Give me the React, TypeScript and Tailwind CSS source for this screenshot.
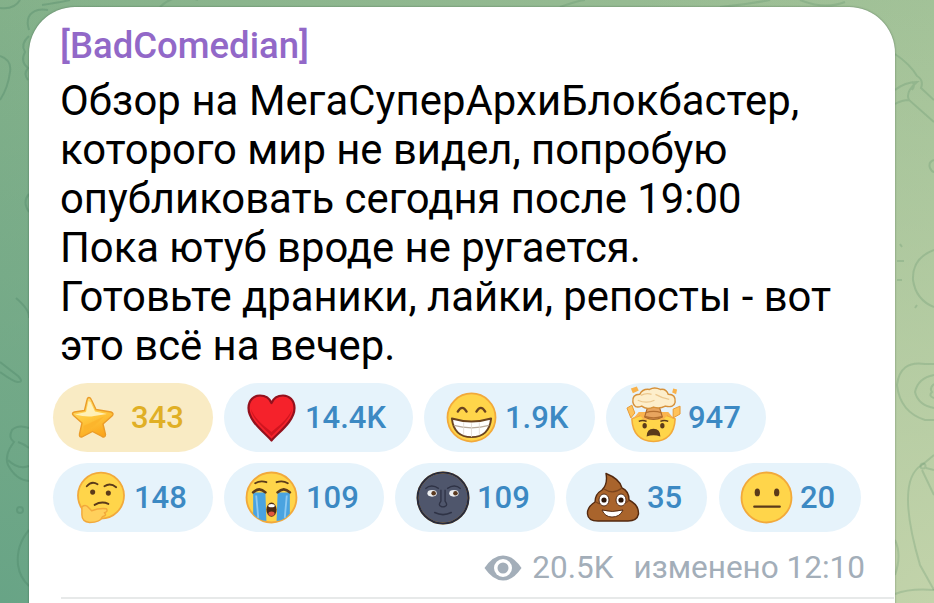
import type { ReactNode } from "react";

const Star = () => (
  <svg viewBox="0 0 44 43" className="h-[43px] w-[44px]">
    <defs>
      <linearGradient id="starFill" x1="0.2" y1="0" x2="0.6" y2="1">
        <stop offset="0" stopColor="#ffe27a" />
        <stop offset="0.5" stopColor="#ffc93f" />
        <stop offset="1" stopColor="#fba61c" />
      </linearGradient>
    </defs>
    <path
      d="M18 1.5 Q19.5 1.5 20.5 4 L25 13.5 L40 16 Q43.5 17.5 41 20 L32 28 L34.5 38.5 Q34.5 42 31 40.5 L21.5 35.5 L11 41 Q8 41.5 8.5 38 L11 27 L2.5 19.5 Q0 17 3.5 16 L13.5 14.5 L16 4 Q16.5 1.5 18 1.5 Z"
      fill="url(#starFill)"
      stroke="#eb9c28"
      strokeWidth="1.4"
      strokeLinejoin="round"
    />
    <path d="M17.5 5 L15 16 L4 18.5 Q16 21.5 23 20 L36 18 L24 15.5 L19.5 6 Z" fill="#fff4c4" opacity="0.9" />
    <path d="M12.5 30 L33 20.5 L24 29 L13 36 Z" fill="#fcb42c" opacity="0.85" />
  </svg>
);

const Heart = () => (
  <svg viewBox="0 0 49 48" className="h-[48px] w-[49px]">
    <path
      d="M24.5 46.5 C17 38 1.5 27 1.5 14 C1.5 6 7 1.5 13 1.5 C18 1.5 22.5 4 24.5 9 C26.5 4 31 1.5 36 1.5 C42 1.5 47.5 6 47.5 14 C47.5 27 32 38 24.5 46.5 Z"
      fill="#f5222b"
      stroke="#93111d"
      strokeWidth="2.2"
      strokeLinejoin="round"
    />
    <path
      d="M24.5 42 C18 35 5 25 4 15 C8 26 19 33 24.5 38 C30 33 41 26 45 15 C44 25 31 35 24.5 42 Z"
      fill="#d0151f"
    />
  </svg>
);

const Face = ({ children, fill = "#ffd54a" }: { children: ReactNode; fill?: string }) => (
  <svg viewBox="0 0 52 52" className="h-full w-full">
    <circle cx="26" cy="26" r="24.5" fill={fill} stroke="#f2a93b" strokeWidth="1.8" />
    {children}
  </svg>
);

const Grin = () => (
  <div className="h-[51px] w-[51px]">
    <Face>
      <path d="M12 20 Q16.5 12.5 21 20 M31 20 Q35.5 12.5 40 20" fill="none" stroke="#6b4420" strokeWidth="2.4" strokeLinecap="round" />
      <path d="M6 27 Q26 33 46 27 Q44 46 26 46 Q8 46 6 27 Z" fill="#fff" stroke="#6b4420" strokeWidth="2" strokeLinejoin="round" />
      <path d="M8 34 Q26 39 44 34" fill="none" stroke="#b8aa9c" strokeWidth="1.2" />
      <path d="M18 31 V44 M26 32 V46 M34 31 V44" stroke="#e0d9d2" strokeWidth="0.8" />
    </Face>
  </div>
);

const Exploding = () => (
  <svg viewBox="0 0 58 58" className="h-[58px] w-[57px]">
    <path d="M7 34 Q8 56 29 57 Q50 56 51 34 Q40 28 29 29 Q18 28 7 34 Z" fill="#ffd54a" stroke="#f2a93b" strokeWidth="1.6" />
    <path d="M8 34 L15 30 L20 36 L29 32 L38 36 L43 30 L50 34 L44 27 L14 27 Z" fill="#fbb44e" />
    <path d="M23 22 H35 L38 32 Q29 37 20 32 Z" fill="#e8a55f" stroke="#a9662d" strokeWidth="1.1" />
    <path d="M21 27.5 Q29 25 37 27.5 M20 31.5 Q29 34.5 38 31.5" fill="none" stroke="#b5702f" strokeWidth="1.3" />
    <path
      d="M8 17 Q7 9 15 9 Q18 3 25 4 Q30 1 36 4 Q42 3 44 9 Q52 9 51 17 Q50 23 41 21 Q35 24 29 22 Q22 25 17 21 Q9 24 8 17 Z"
      fill="#fdeecb"
      stroke="#d6913a"
      strokeWidth="1.5"
    />
    <path d="M13 15 Q22 19 30 15 M31 9 Q38 13 45 14 M16 10 Q22 7 27 9" fill="none" stroke="#ecc88f" strokeWidth="1.3" />
    <path d="M2 23 L7 20 L10 28 L6 33 Z" fill="#ffc25a" stroke="#e79a35" strokeWidth="1" />
    <path d="M49 24 L56 21 L56 29 L49 33 Z" fill="#ffc25a" stroke="#e79a35" strokeWidth="1" />
    <path d="M6 3 L12 1 L14 5 L8 8 Z" fill="#f9b24b" />
    <path d="M49 3 L53 4 L52 9 L48 7 Z" fill="#f9b24b" />
    <ellipse cx="20" cy="41" rx="2.2" ry="2.8" fill="#5b3a1a" />
    <ellipse cx="38" cy="41" rx="2.2" ry="2.8" fill="#5b3a1a" />
    <path d="M22 52 Q22 44 29 44 Q36 44 36 52 Q29 49 22 52 Z" fill="#5b3a1a" />
    <path d="M14 36.5 Q18 34.5 22 36.5 M36 36.5 Q40 34.5 44 36.5" fill="none" stroke="#5b3a1a" strokeWidth="1.5" />
  </svg>
);

const Thinking = () => (
  <svg viewBox="0 0 50 53" className="h-[53px] w-[49px]">
    <circle cx="25.5" cy="24.5" r="23.5" fill="#ffd54a" stroke="#f2a93b" strokeWidth="1.8" />
    <path d="M11 15 Q16 9 22 13 M29 15 Q35 11 41 16" fill="none" stroke="#5b3a1a" strokeWidth="1.9" strokeLinecap="round" />
    <circle cx="17" cy="21" r="2.6" fill="#5b3a1a" />
    <circle cx="33" cy="22" r="2.6" fill="#5b3a1a" />
    <path d="M19 34 Q26 30 33 33" fill="none" stroke="#5b3a1a" strokeWidth="2" strokeLinecap="round" />
    <path
      d="M6 36 Q10 33 13 37 L16 40 Q24 37 31 38 Q33 41 29 42 Q32 45 27 46 Q25 52 14 52 Q6 51 6 44 Z"
      fill="#ffd05c"
      stroke="#f2a93b"
      strokeWidth="1.5"
      strokeLinejoin="round"
    />
  </svg>
);

const Crying = () => (
  <div className="h-[53px] w-[53px]">
    <Face>
      <path d="M10 12 Q15 9 21 11 M31 11 Q37 9 42 12" fill="none" stroke="#5b3a1a" strokeWidth="1.8" strokeLinecap="round" />
      <path d="M8 21 H20 L21 49 Q14 49 8 42 Z M32 21 H44 V42 Q38 49 31 49 Z" fill="#4aa3e0" />
      <path d="M8 21 Q14 15 20 21 M32 21 Q38 15 44 21" fill="none" stroke="#5b3a1a" strokeWidth="2.6" strokeLinecap="round" />
      <path d="M11 24 L13 46 M41 24 L39 46" stroke="#8cc9f2" strokeWidth="1.8" />
      <ellipse cx="26" cy="38" rx="5" ry="7" fill="#4c2a14" />
      <ellipse cx="26" cy="34" rx="3.2" ry="1.6" fill="#fff" />
      <ellipse cx="26" cy="42" rx="3" ry="2.2" fill="#e2563e" />
    </Face>
  </div>
);

const Moon = () => (
  <div className="h-[54px] w-[54px]">
    <Face fill="#4f566c">
      <circle cx="26" cy="26" r="24.5" fill="none" stroke="#272b3d" strokeWidth="2" />
      <path d="M9 17 Q15 12 22 17 M30 17 Q37 12 43 17" fill="none" stroke="#2f3346" strokeWidth="1.3" />
      <ellipse cx="15.5" cy="21.5" rx="4.5" ry="3.2" fill="#eef0f2" />
      <ellipse cx="36.5" cy="21.5" rx="4.5" ry="3.2" fill="#eef0f2" />
      <circle cx="17" cy="21.5" r="2.2" fill="#5a3a20" />
      <circle cx="38" cy="21.5" r="2.2" fill="#5a3a20" />
      <path d="M24 18 V29 Q21 33 24 34 Q26 35 28 34 Q31 33 28 29 V18" fill="none" stroke="#2f3346" strokeWidth="1.3" />
      <path d="M18 40 Q26 44 34 40" fill="none" stroke="#2f3346" strokeWidth="1.5" strokeLinecap="round" />
    </Face>
  </div>
);

const Poop = () => (
  <svg viewBox="0 0 54 51" className="h-[51px] w-[54px]">
    <path
      d="M20 1.5 Q34 7 36 16 Q43 19 43 28 Q53 33 52.5 42 Q51 49 42 49 H12 Q2 49 1.5 42 Q1 35 9 30 Q9 22 16 18 Q22 12 20 1.5 Z"
      fill="#a9642c"
      stroke="#53290f"
      strokeWidth="1.4"
      strokeLinejoin="round"
    />
    <path d="M18 17 Q27 23 36 16 M10 30 Q14 33 18 32 M38 31 Q41 31 43 28" fill="none" stroke="#7b441c" strokeWidth="1.2" />
    <ellipse cx="18" cy="28" rx="5" ry="6" fill="#fff" stroke="#4a2410" strokeWidth="0.9" />
    <ellipse cx="35" cy="28" rx="5" ry="6" fill="#fff" stroke="#4a2410" strokeWidth="0.9" />
    <circle cx="18" cy="28" r="2.6" fill="#2a1408" />
    <circle cx="35" cy="28" r="2.6" fill="#2a1408" />
    <path d="M16 38 Q26 41 37 38 Q34 45 26 45 Q19 45 16 38 Z" fill="#fff" stroke="#4a2410" strokeWidth="0.9" />
  </svg>
);

const Neutral = () => (
  <div className="h-[53px] w-[53px]">
    <Face>
      <ellipse cx="17" cy="21" rx="2.6" ry="3.8" fill="#5b3a1a" />
      <ellipse cx="36" cy="21" rx="2.6" ry="3.8" fill="#5b3a1a" />
      <path d="M14 35 H39" stroke="#5b3a1a" strokeWidth="2.2" strokeLinecap="round" />
    </Face>
  </div>
);

const Pill = ({
  icon,
  count,
  className,
  gold,
}: {
  icon: ReactNode;
  count: string;
  className: string;
  gold?: boolean;
}) => (
  <div
    className={`flex h-[69px] items-center rounded-full font-medium ${
      gold ? "bg-[#f9ebc4] text-[#e0af25]" : "bg-[#e6f3fb] text-[#3c89c3]"
    } ${className}`}
  >
    {icon}
    <span className="text-[31px] leading-none">{count}</span>
  </div>
);

// faint food doodles of the chat wallpaper
const Wallpaper = () => (
  <svg viewBox="0 0 934 603" className="absolute inset-0 h-full w-full" fill="none" strokeWidth="2">
    <g stroke="#3f7a5c" strokeOpacity="0.28">
      <path d="M0 8 Q14 10 20 0 M42 5 Q62 2 70 0" />
      <path d="M29 30 Q24 14 38 10 Q42 9 48 10 M29 36 Q20 44 25 52 Q20 62 28 68 Q23 74 28 80" />
      <path d="M0 56 Q12 60 10 72 Q8 88 0 100" />
      <path d="M29 194 Q22 202 29 212" />
      <path d="M16 298 Q30 310 29 318" />
      <path d="M0 362 L18 376 Q24 382 18 382 Q14 382 0 372" />
      <path d="M29 428 Q18 424 12 430 Q8 438 14 442 Q4 455 8 465 Q16 480 29 481 M8 460 Q18 470 29 466 M18 442 Q24 444 29 448" />
      <circle cx="20" cy="510" r="3" />
      <path d="M29 530 Q16 545 18 565 Q20 578 29 586" />
    </g>
    <g stroke="#4d8560" strokeOpacity="0.22">
      <path d="M160 7 Q175 -8 198 0 M560 7 Q580 0 585 0 M720 7 Q750 4 770 0 M800 0 Q825 10 845 2" />
      <path d="M895 54 Q910 64 917 76 Q924 80 921 88 L934 100 M895 90 Q905 82 917 82 Q905 92 909 100 L934 122 M895 104 Q902 100 909 100 M912 82 Q916 84 912 90" />
      <path d="M934 160 Q928 162 930 168 Q932 172 934 172" />
      <path d="M934 250 Q912 258 913 280 Q916 300 934 307 M900 244 L902 247 M897 261 H904 M897 280 H902 M917 305 L915 308" />
      <path d="M897 385 Q900 360 925 364 H934 M897 385 Q900 412 925 420 H934 M934 375 Q918 378 915 392 Q918 405 934 408 M934 384 Q929 388 932 392 Q928 396 934 398" />
      <path d="M922 465 L934 455 M922 465 Q895 480 920 565 L934 590 M922 470 L934 495 M926 468 L934 470" />
      <circle cx="923" cy="466" r="2.5" />
      <path d="M895 540 Q902 555 895 575 M895 594 Q910 588 934 590" />
    </g>
  </svg>
);

export default function App() {
  return (
    <div className="relative h-[603px] w-[934px] overflow-hidden bg-[radial-gradient(circle_at_0%_100%,#68a486_0%,transparent_55%),radial-gradient(circle_at_100%_100%,#c2d3aa_0%,transparent_60%),linear-gradient(90deg,#84b18a_0%,#9fc096_100%)] pl-[29px] pt-[7px] font-['Roboto',sans-serif]">
      <Wallpaper />
      <div className="relative flex h-[620px] w-[866px] flex-col rounded-t-[46px] bg-white pl-[32px] pt-[18px] shadow-[0_0_2px_rgba(30,60,40,0.55)]">
        <h1 className="-ml-px text-[36.5px] font-medium leading-[41px] text-[#9268c8]">[BadComedian]</h1>
        <p className="-ml-px mt-[10px] text-[41.8px] leading-[49px] text-black">
          <span className="tracking-[0.1px]">Обзор на МегаСуперАрхиБлокбастер,</span>
          <br />
          которого мир не видел, попробую
          <br />
          опубликовать сегодня после 19:00
          <br />
          Пока ютуб вроде не ругается.
          <br />
          Готовьте драники, лайки, репосты - вот
          <br />
          это всё на вечер.
        </p>
        <div className="-ml-[8px] mt-[13px] flex flex-col gap-[11px]">
          <div className="flex gap-[11px]">
            <Pill gold className="w-[160px] pl-[18px]" count="343" icon={<span className="mr-[16px] flex"><Star /></span>} />
            <Pill className="w-[189px] pl-[23px]" count="14.4K" icon={<span className="mr-[9px] flex"><Heart /></span>} />
            <Pill className="w-[171px] pl-[22px]" count="1.9K" icon={<span className="mr-[8px] flex"><Grin /></span>} />
            <Pill className="w-[160px] pl-[19px]" count="947" icon={<span className="mr-[6px] -mt-[7px] flex"><Exploding /></span>} />
          </div>
          <div className="flex gap-[11px]">
            <Pill className="w-[160px] pl-[23px]" count="148" icon={<span className="mr-[9px] flex"><Thinking /></span>} />
            <Pill className="w-[160px] pl-[21px]" count="109" icon={<span className="mr-[8px] flex"><Crying /></span>} />
            <Pill className="w-[160px] pl-[21px]" count="109" icon={<span className="mr-[7px] flex"><Moon /></span>} />
            <Pill className="w-[141px] pl-[20px]" count="35" icon={<span className="mr-[7px] flex"><Poop /></span>} />
            <Pill className="ml-px w-[142px] pl-[21px]" count="20" icon={<span className="mr-[7px] flex"><Neutral /></span>} />
          </div>
        </div>
        <div className="mt-[16px] flex items-center pr-[30px] text-[31.5px] leading-[40px] text-[#a3aeb9]">
          <div className="ml-auto flex items-center">
            <svg viewBox="0 0 38 26" className="mr-[10px] h-[26px] w-[38px]">
              <path d="M0.5 13 Q9 0.5 19 0.5 Q29 0.5 37.5 13 Q29 25.5 19 25.5 Q9 25.5 0.5 13 Z" fill="#a3aeb9" />
              <circle cx="19" cy="13" r="9" fill="#fff" />
              <circle cx="19" cy="13" r="5.5" fill="#a3aeb9" />
            </svg>
            <span>20.5K</span>
            <span className="ml-[20px]">изменено 12:10</span>
          </div>
        </div>
        <div className="mt-[9px] h-[2px] w-[833px] bg-[#e7e9e9]" />
      </div>
    </div>
  );
}
